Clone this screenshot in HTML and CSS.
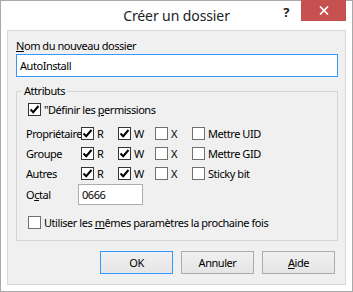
FILE: index.html
```html
<!DOCTYPE html>
<html lang="fr">
<head>
  <meta charset="UTF-8" />
  <title>Créer un dossier</title>
  <link rel="stylesheet" href="styles.css">
</head>
<body>
  <div class="window">
    <!-- Title bar -->
    <div class="titlebar">
      <div></div>
      <div class="title">Créer un dossier</div>
      <div class="controls">
        <span class="help">?</span>
        <span class="close">
          <svg width="10" height="9" viewBox="0 0 10 9"><path d="M1 0.5 L9 8.5 M9 0.5 L1 8.5" stroke="#fff" stroke-width="1.7" fill="none"/></svg>
        </span>
      </div>
    </div>

    <div class="client">
      <div class="name-label"><u>N</u>om du nouveau dossier</div>
      <div class="text-input">AutoInstall</div>

      <fieldset class="group">
        <legend>Attributs</legend>
        <div class="check-row">
          <span class="cb checked"><svg width="11" height="11" viewBox="0 0 11 11"><path d="M1.5 5.5 L4.2 8.2 L9.5 2" stroke="#000" stroke-width="2" fill="none"/></svg></span>
          <span>"Définir les <u>p</u>ermissions</span>
        </div>

        <div class="perm-grid">
          <span class="perm-label">Propriétaire</span>
          <span class="opt"><span class="cb checked"><svg width="11" height="11" viewBox="0 0 11 11"><path d="M1.5 5.5 L4.2 8.2 L9.5 2" stroke="#000" stroke-width="2" fill="none"/></svg></span>R</span>
          <span class="opt"><span class="cb checked"><svg width="11" height="11" viewBox="0 0 11 11"><path d="M1.5 5.5 L4.2 8.2 L9.5 2" stroke="#000" stroke-width="2" fill="none"/></svg></span>W</span>
          <span class="opt"><span class="cb"></span>X</span>
          <span class="opt"><span class="cb"></span>Mettre UID</span>

          <span class="perm-label">Groupe</span>
          <span class="opt"><span class="cb checked"><svg width="11" height="11" viewBox="0 0 11 11"><path d="M1.5 5.5 L4.2 8.2 L9.5 2" stroke="#000" stroke-width="2" fill="none"/></svg></span>R</span>
          <span class="opt"><span class="cb checked"><svg width="11" height="11" viewBox="0 0 11 11"><path d="M1.5 5.5 L4.2 8.2 L9.5 2" stroke="#000" stroke-width="2" fill="none"/></svg></span>W</span>
          <span class="opt"><span class="cb"></span>X</span>
          <span class="opt"><span class="cb"></span>Mettre GID</span>

          <span class="perm-label">Autres</span>
          <span class="opt"><span class="cb checked"><svg width="11" height="11" viewBox="0 0 11 11"><path d="M1.5 5.5 L4.2 8.2 L9.5 2" stroke="#000" stroke-width="2" fill="none"/></svg></span>R</span>
          <span class="opt"><span class="cb checked"><svg width="11" height="11" viewBox="0 0 11 11"><path d="M1.5 5.5 L4.2 8.2 L9.5 2" stroke="#000" stroke-width="2" fill="none"/></svg></span>W</span>
          <span class="opt"><span class="cb"></span>X</span>
          <span class="opt"><span class="cb"></span>Sticky bit</span>
        </div>

        <div class="octal-row">
          <span class="octal-label">O<u>c</u>tal</span>
          <div class="octal-input">0666</div>
        </div>

        <div class="check-row last">
          <span class="cb"></span>
          <span>Utiliser les <u>m</u>êmes paramètres la prochaine fois</span>
        </div>
      </fieldset>

      <div class="buttons">
        <div class="btn default">OK</div>
        <div class="btn">Annuler</div>
        <div class="btn"><u>A</u>ide</div>
      </div>
    </div>
  </div>
</body>
</html>
```

FILE: styles.css
```css
* {
  box-sizing: border-box;
}
body {
  margin: 0;
  font-family: "Noto Sans", sans-serif;
  font-size: 11px;
  letter-spacing: -0.45px;
  color: #000;
}
.window {
  width: 353px;
  height: 292px;
  border: 1px solid #a9a9a9;
  background: #fff;
  padding: 0 6px 6px;
  display: flex;
  flex-direction: column;
}
/* Title bar */
.titlebar {
  height: 29px;
  flex-shrink: 0;
  display: grid;
  grid-template-columns: 1fr auto 1fr;
}
.title {
  font-size: 14px;
  letter-spacing: -0.1px;
  line-height: 29px;
  color: #222;
}
.controls {
  display: flex;
  justify-content: flex-end;
  align-items: flex-start;
  margin-top: -1px;
}
.help {
  font-weight: bold;
  font-size: 13px;
  line-height: 13px;
  margin-top: 6px;
  margin-right: 12px;
  color: #222;
}
.close {
  width: 45px;
  height: 21px;
  background: #c75050;
  display: flex;
  align-items: center;
  justify-content: center;
}
/* Client area */
.client {
  flex: 1;
  border: 1px solid #d9d9d9;
  background: #f0f0f0;
  padding: 7px 7px 0 8px;
  display: flex;
  flex-direction: column;
}
.name-label {
  line-height: 16px;
}
.text-input {
  height: 23px;
  border: 1px solid #3399ff;
  background: #fff;
  padding: 0 3px;
  line-height: 21px;
}
.group {
  margin: 6px 0 0;
  padding: 0 8px 8px 5px;
  border: 1px solid #d5d5d5;
  min-width: 0;
}
.group legend {
  padding: 0 2px;
  line-height: 16px;
}
.check-row {
  height: 20px;
  display: flex;
  align-items: center;
  gap: 3px;
  padding-left: 6px;
}
.check-row.last {
  margin-top: 7px;
}
.cb {
  width: 13px;
  height: 13px;
  flex-shrink: 0;
  border: 1px solid #707070;
  background: #fff;
  display: inline-flex;
}
.cb.checked {
  border-color: #333;
}
.perm-grid {
  margin-top: 4px;
  padding-left: 4px;
  display: grid;
  grid-template-columns: 55px 37px 37px 37px auto;
  grid-auto-rows: 20px;
  align-items: center;
}
.perm-label {
  white-space: nowrap;
}
.opt {
  display: flex;
  align-items: center;
  gap: 3px;
  white-space: nowrap;
}
.octal-row {
  margin-top: 1px;
  padding-left: 4px;
  height: 21px;
  display: flex;
  align-items: center;
}
.octal-label {
  width: 52px;
}
.octal-input {
  width: 65px;
  height: 21px;
  border: 1px solid #adadad;
  background: #fff;
  padding: 0 3px;
  line-height: 19px;
}
/* Dialog buttons */
.buttons {
  margin-top: 10px;
  padding-right: 3px;
  display: flex;
  justify-content: flex-end;
  gap: 8px;
}
.btn {
  width: 73px;
  height: 23px;
  border: 1px solid #acacac;
  background: linear-gradient(#f0f0f0, #e5e5e5);
  display: flex;
  align-items: center;
  justify-content: center;
}
.btn.default {
  border-color: #3399ff;
}
```
